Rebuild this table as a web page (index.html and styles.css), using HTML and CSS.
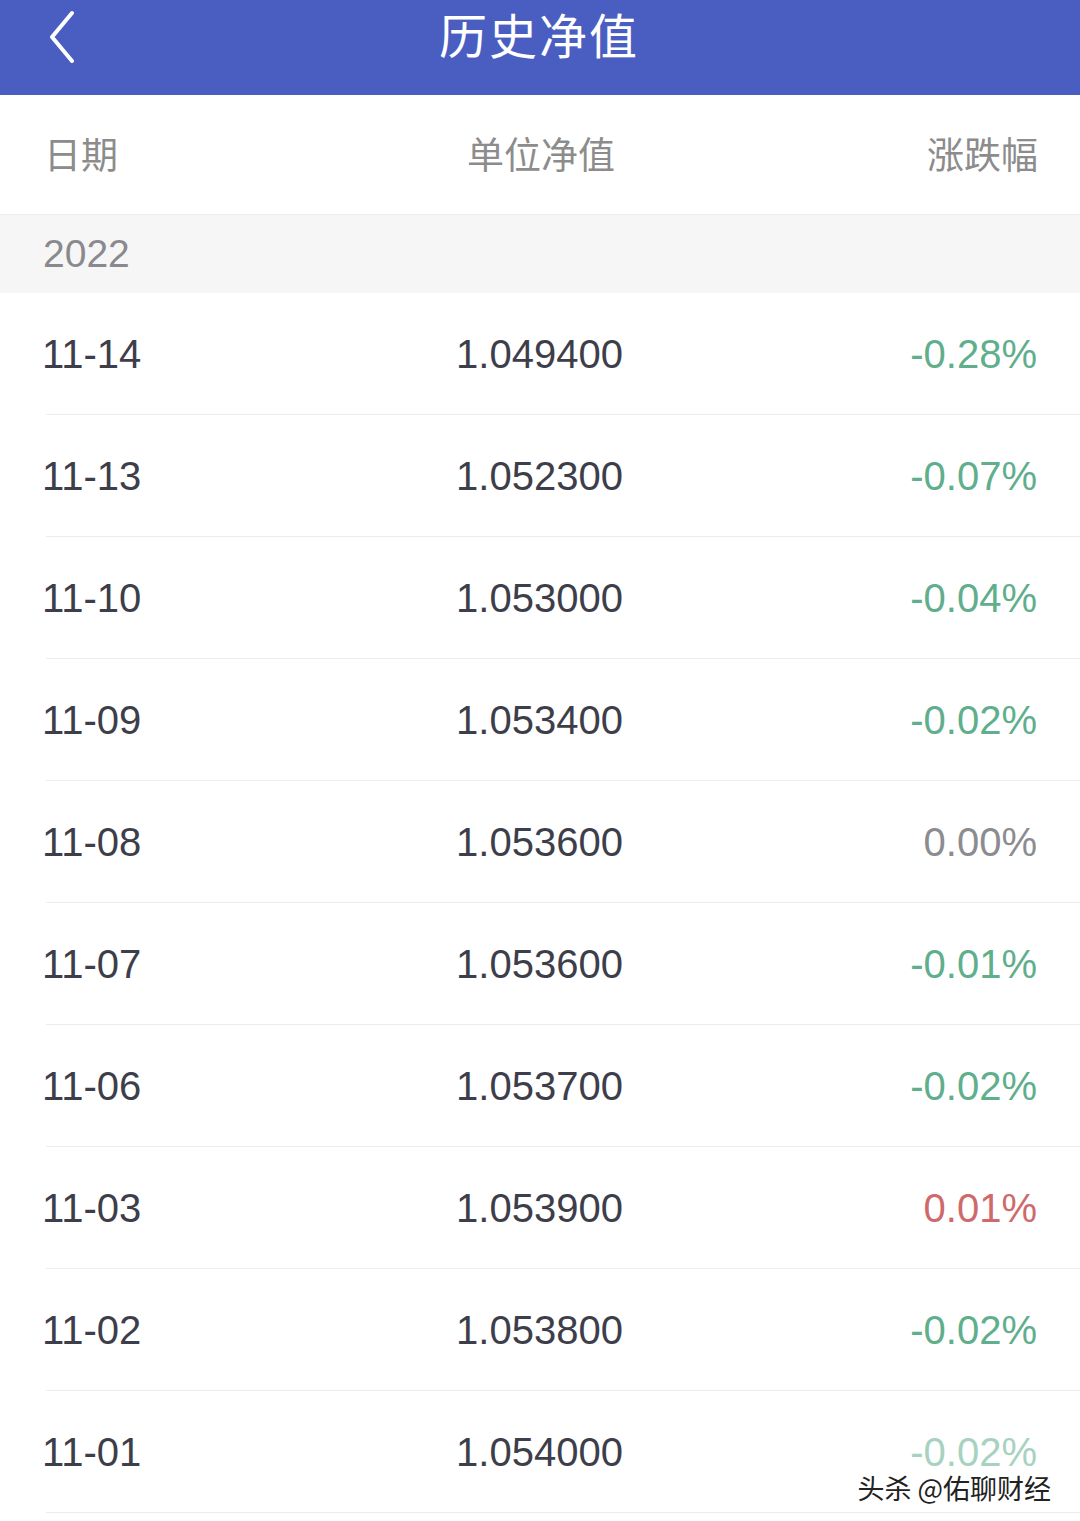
FILE: index.html
```html
<!DOCTYPE html>
<html lang="zh">
<head>
<meta charset="utf-8">
<link rel="stylesheet" href="styles.css">
</head>
<body>
<div class="page">
  <header class="topbar">
    <svg class="back" width="40" height="56" viewBox="0 0 40 56"><path d="M30 6 L10 30 L30 54" fill="none" stroke="#ffffff" stroke-width="4" stroke-linecap="round" stroke-linejoin="round"/></svg>
    <h1 class="title">历史净值</h1>
  </header>
  <div class="colhead">
    <span class="c1">日期</span>
    <span class="c2">单位净值</span>
    <span class="c3">涨跌幅</span>
  </div>
  <div class="year">2022</div>
  <div class="list">
    <div class="row"><span class="c1">11-14</span><span class="c2">1.049400</span><span class="c3 down">-0.28%</span></div>
    <div class="row"><span class="c1">11-13</span><span class="c2">1.052300</span><span class="c3 down">-0.07%</span></div>
    <div class="row"><span class="c1">11-10</span><span class="c2">1.053000</span><span class="c3 down">-0.04%</span></div>
    <div class="row"><span class="c1">11-09</span><span class="c2">1.053400</span><span class="c3 down">-0.02%</span></div>
    <div class="row"><span class="c1">11-08</span><span class="c2">1.053600</span><span class="c3 flat">0.00%</span></div>
    <div class="row"><span class="c1">11-07</span><span class="c2">1.053600</span><span class="c3 down">-0.01%</span></div>
    <div class="row"><span class="c1">11-06</span><span class="c2">1.053700</span><span class="c3 down">-0.02%</span></div>
    <div class="row"><span class="c1">11-03</span><span class="c2">1.053900</span><span class="c3 up">0.01%</span></div>
    <div class="row"><span class="c1">11-02</span><span class="c2">1.053800</span><span class="c3 down">-0.02%</span></div>
    <div class="row last"><span class="c1">11-01</span><span class="c2">1.054000</span><span class="c3 down faded">-0.02%</span>
      <div class="watermark">头杀 @佑聊财经</div>
    </div>
  </div>
</div>
</body>
</html>
```

FILE: styles.css
```css
* { box-sizing: border-box; margin: 0; padding: 0; }
html, body { background: #ffffff; }
body {
  width: 1080px;
  height: 1521px;
  overflow: hidden;
  font-family: "Liberation Sans", Arial, "Noto Sans CJK SC", sans-serif;
}
.page { width: 1080px; }
.topbar {
  position: relative;
  height: 95px;
  background: #4a5ec2;
  display: flex;
  align-items: flex-start;
  justify-content: center;
}
.back {
  position: absolute;
  left: 42px;
  top: 7px;
}
.title {
  font-family: "Noto Sans CJK SC", sans-serif;
  font-weight: 400;
  font-size: 48px;
  color: #ffffff;
  line-height: 66px;
  letter-spacing: 2px;
  margin-left: -2px;
}
.colhead {
  height: 120px;
  display: grid;
  grid-template-columns: 1fr 1fr 1fr;
  align-items: center;
  padding: 0 42px 4px 44px;
  font-family: "Noto Sans CJK SC", sans-serif;
  font-size: 37px;
  color: #8c8c8c;
  border-bottom: 1px solid #ececec;
}
.c1 { text-align: left; }
.c2 { text-align: center; }
.c3 { text-align: right; }
.year {
  height: 78px;
  background: #f6f6f7;
  display: flex;
  align-items: center;
  padding-left: 43px;
  font-size: 39px;
  color: #8a8a8e;
}
.row {
  position: relative;
  height: 122px;
  display: grid;
  grid-template-columns: 1fr 1fr 1fr;
  align-items: center;
  padding: 0 43px 0 42px;
  font-size: 40px;
  line-height: 1;
  color: #3d3e4a;
}
.row::after {
  content: "";
  position: absolute;
  left: 46px;
  right: 0;
  bottom: 0;
  height: 1px;
  background: #ededef;
}
.down { color: #5fae8c; }
.up { color: #cf6a6c; }
.flat { color: #8c8c90; }
.faded { opacity: 0.55; }
.watermark {
  position: absolute;
  right: 25px;
  top: 82px;
  font-family: "Noto Sans CJK SC", sans-serif;
  font-size: 27px;
  line-height: 30px;
  color: #222222;
  padding: 0 4px;
  text-shadow: 1px 1px 0 #ffffff, -1px -1px 0 #ffffff, 1px -1px 0 #ffffff, -1px 1px 0 #ffffff;
}
```
